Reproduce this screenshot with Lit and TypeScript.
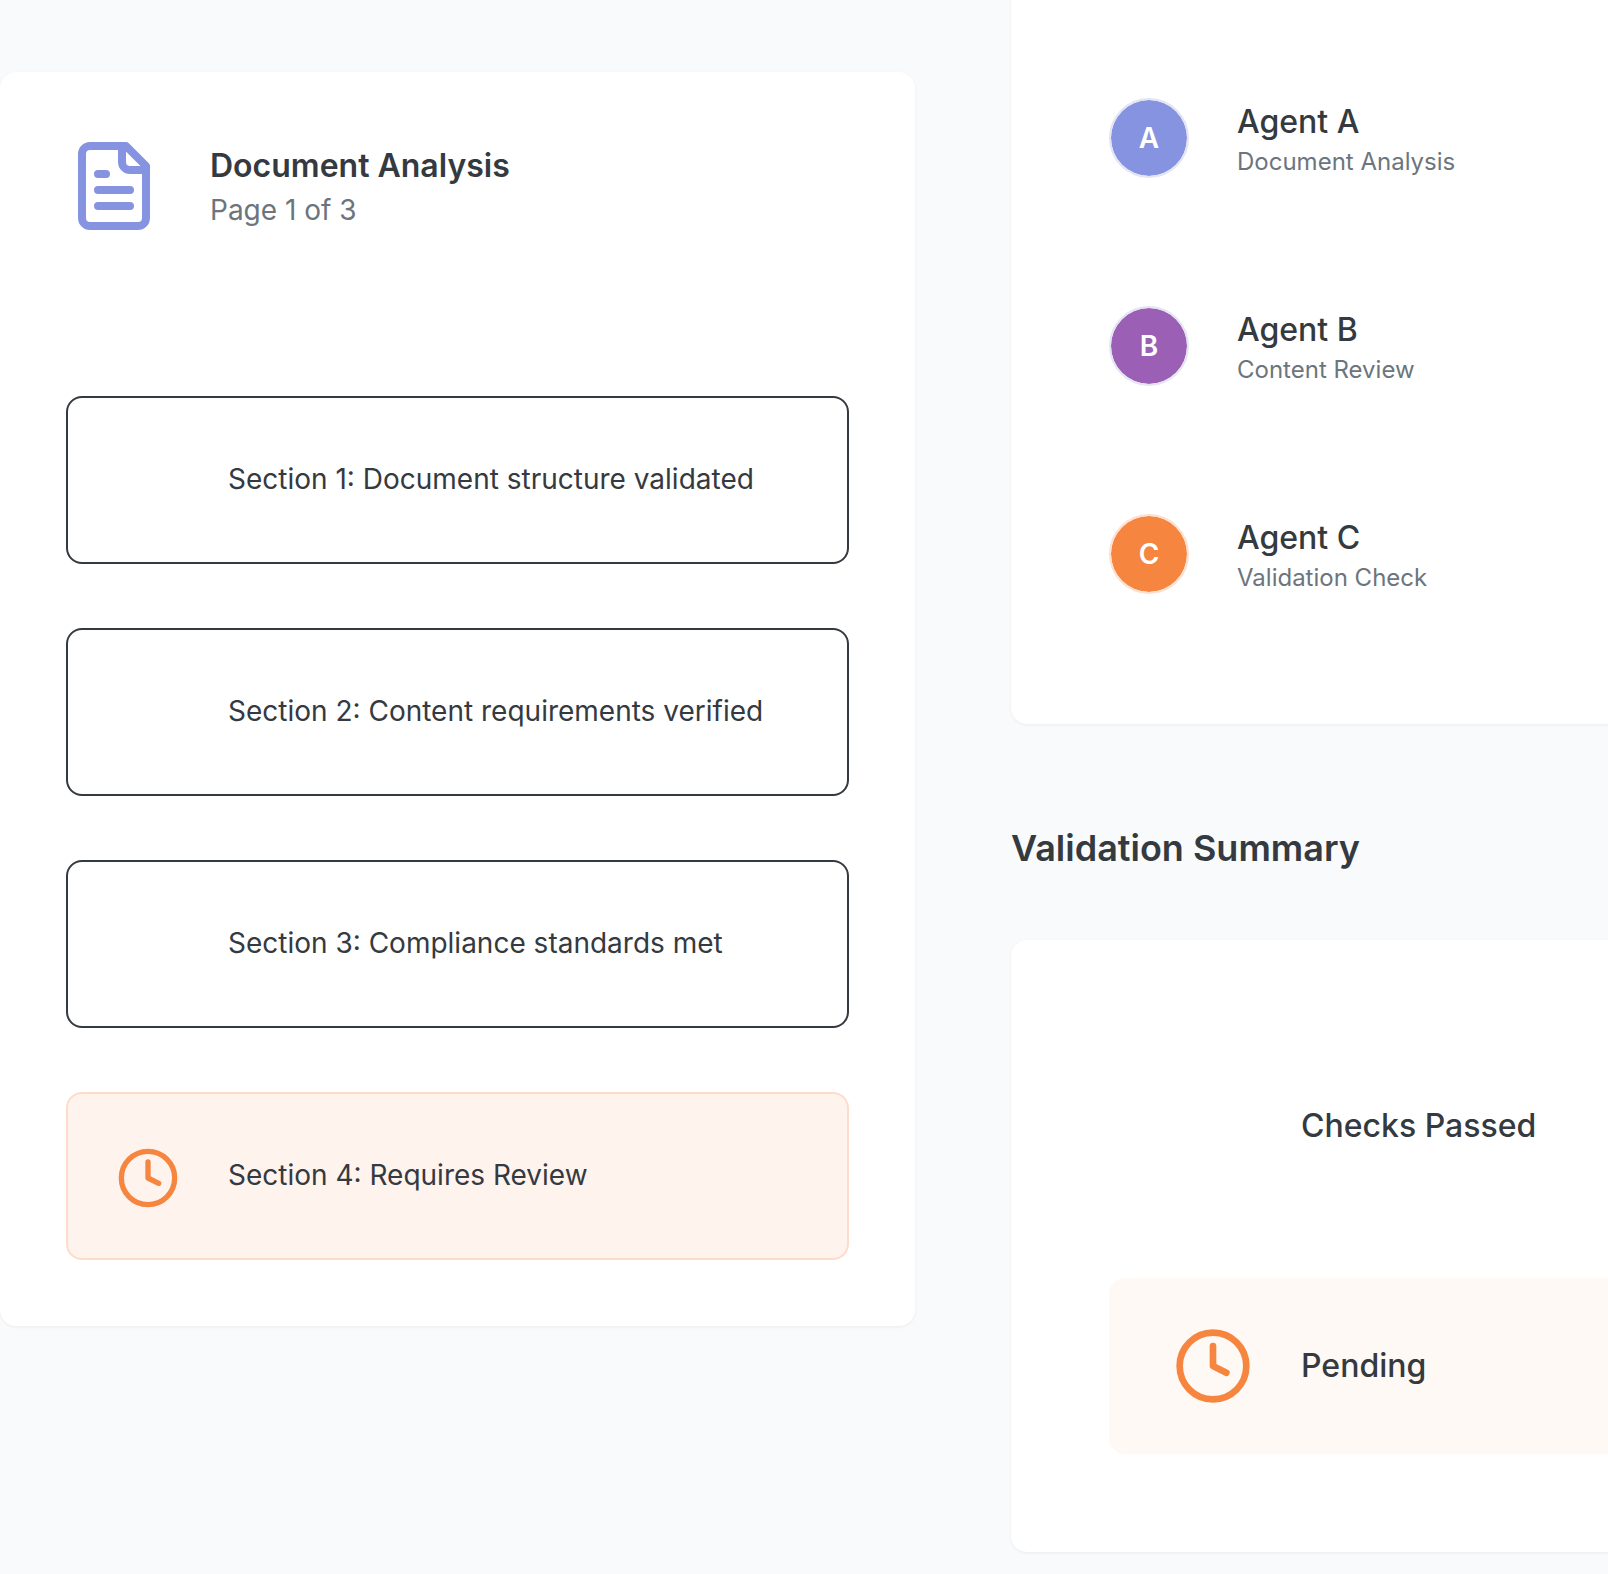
import { LitElement, html, css, svg } from "lit";
import { customElement } from "lit/decorators.js";

const clock = (cls: string) => html`<svg class=${cls} viewBox="0 0 24 24" fill="none" stroke="currentColor" stroke-width="2" stroke-linecap="round" stroke-linejoin="round">
  <circle cx="12" cy="12" r="10"></circle><path d="M12 6v6l4 2"></path></svg>`;

const sections = [
  { text: "Section 1: Document structure validated", review: false },
  { text: "Section 2: Content requirements verified", review: false },
  { text: "Section 3: Compliance standards met", review: false },
  { text: "Section 4: Requires Review", review: true },
];
const agents = [
  { l: "A", name: "Agent A", role: "Document Analysis", cls: "a" },
  { l: "B", name: "Agent B", role: "Content Review", cls: "b" },
  { l: "C", name: "Agent C", role: "Validation Check", cls: "c" },
];

@customElement("app-root")
export class AppRoot extends LitElement {
  static styles = css`
    :host { display: block; width: 1608px; height: 1574px; overflow: hidden; background: #f9fafc; font-family: Inter, "Liberation Sans", sans-serif; color: #343a40; }
    .page { display: flex; gap: 96px; align-items: flex-start; }
    .card { background: #fff; border-radius: 16px; box-shadow: 0 1px 2px 1px rgba(0, 0, 0, 0.035); box-sizing: border-box; }
    .left { flex: none; width: 915px; margin-top: 72px; padding: 66px; }
    .head { display: flex; align-items: center; gap: 48px; margin-bottom: 162px; }
    .doc { flex: none; width: 96px; height: 96px; color: #8593e0; display: block; }
    .head-text { padding-top: 1px; }
    .title { font-size: 32px; line-height: 48px; font-weight: 600; }
    .page-no { font-size: 28px; line-height: 42px; margin-top: -1px; color: #6c757d; }
    .list { display: flex; flex-direction: column; gap: 64px; }
    .item { display: flex; align-items: center; gap: 48px; height: 168px; box-sizing: border-box; padding: 0 48px; border: 2px solid #343a40; border-radius: 16px; font-size: 28px; line-height: 42px; }
    .item.review { background: #fff3ee; border-color: #fedccb; }
    .slot { flex: none; width: 64px; height: 68px; display: flex; align-items: flex-end; }
    .clock-s { width: 64px; height: 64px; color: #f6853f; display: block; }
    .label { padding-bottom: 2px; }
    .right { flex: none; width: 800px; display: flex; flex-direction: column; }
    .agents { margin-top: -32px; padding: 130px 98px; display: flex; flex-direction: column; gap: 128px; }
    .agent { display: flex; align-items: center; gap: 48px; height: 80px; }
    .avatar { flex: none; width: 80px; height: 80px; box-sizing: border-box; border-radius: 50%; border: 2px solid #e3e5f1; display: flex; align-items: center; justify-content: center; color: #fff; font-size: 28px; font-weight: 600; }
    .avatar.a { background: #8593e0; background-clip: padding-box; }
    .avatar.b { background: #9b5fb5; background-clip: padding-box; }
    .avatar.c { background: #f6853f; background-clip: padding-box; border-color: #fde0d0; }
    .agent-text { padding-top: 4px; }
    .name { font-size: 32px; line-height: 44px; font-weight: 500; }
    .role { font-size: 24px; line-height: 36px; color: #6c757d; }
    h2 { margin: 94px 0 62px; font-size: 36px; line-height: 60px; font-weight: 600; }
    .summary { padding: 98px 98px 98px; display: flex; flex-direction: column; gap: 64px; }
    .stat { display: flex; align-items: center; gap: 48px; height: 176px; padding: 0 64px; border-radius: 16px; font-size: 32px; font-weight: 500; }
    .stat span { padding-bottom: 2px; }
    .stat.pending { background: #fef9f4; }
    .clock-l { flex: none; width: 80px; height: 80px; color: #f6853f; display: block; }
    .blank { flex: none; width: 80px; height: 80px; }
  `;

  render() {
    return html`<div class="page">
      <section class="card left">
        <div class="head">
          <svg class="doc" viewBox="0 0 24 24" fill="none" stroke="currentColor" stroke-width="2" stroke-linecap="round" stroke-linejoin="round">
            ${svg`<path d="M15 2H6a2 2 0 0 0-2 2v16a2 2 0 0 0 2 2h12a2 2 0 0 0 2-2V7Z"></path>
            <path d="M14 2v4a2 2 0 0 0 2 2h4"></path><path d="M10 9H8"></path><path d="M16 13H8"></path><path d="M16 17H8"></path>`}
          </svg>
          <div class="head-text"><div class="title">Document Analysis</div><div class="page-no">Page 1 of 3</div></div>
        </div>
        <div class="list">
          ${sections.map((s) => html`<div class="item ${s.review ? "review" : ""}">
            <div class="slot">${s.review ? clock("clock-s") : ""}</div><span class="label">${s.text}</span></div>`)}
        </div>
      </section>
      <div class="right">
        <section class="card agents">
          ${agents.map((a) => html`<div class="agent"><div class="avatar ${a.cls}">${a.l}</div>
            <div class="agent-text"><div class="name">${a.name}</div><div class="role">${a.role}</div></div></div>`)}
        </section>
        <h2>Validation Summary</h2>
        <section class="card summary">
          <div class="stat"><div class="blank"></div><span>Checks Passed</span></div>
          <div class="stat pending">${clock("clock-l")}<span>Pending</span></div>
        </section>
      </div>
    </div>`;
  }
}
